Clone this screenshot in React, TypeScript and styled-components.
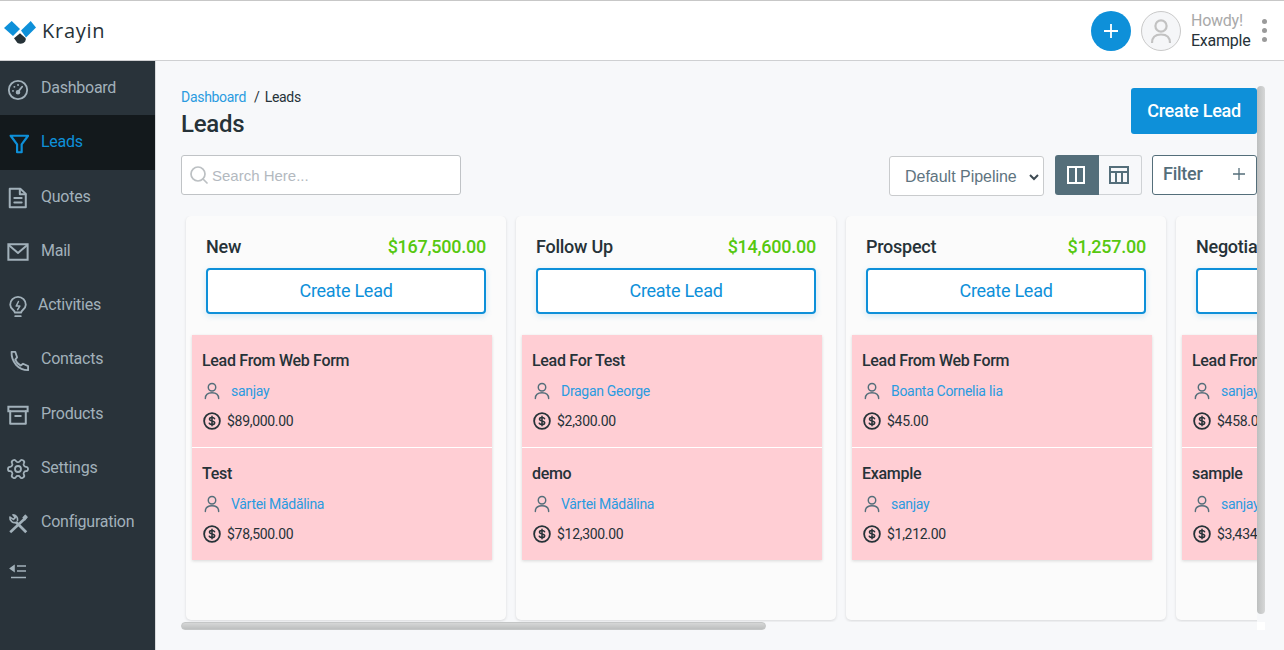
import React from "react";
import styled, { createGlobalStyle } from "styled-components";

const Global = createGlobalStyle`
  html, body { margin: 0; padding: 0; height: 100%; overflow: hidden; background: #f7f8fa; }
  body { font-family: Roboto, "Liberation Sans", sans-serif; color: #263238; letter-spacing: -0.25px; }
  * { box-sizing: border-box; }
`;

const Page = styled.div`
  width: 1284px;
  height: 650px;
  display: flex;
  flex-direction: column;
  overflow: hidden;
`;

const Header = styled.header`
  height: 61px;
  flex: none;
  background: #fff;
  border-top: 1px solid #c7c7c7;
  border-bottom: 1px solid #cfd0d2;
  display: flex;
  align-items: center;
  padding: 0 16px 0 4px;
`;

const Brand = styled.div`
  display: flex;
  align-items: center;
  gap: 6px;
  flex: 1;
`;

const BrandMark = styled.svg`
  width: 32px;
  height: 24px;
  flex: none;
  margin-top: 3px;
`;

const BrandName = styled.span`
  font-family: "Open Sans", sans-serif;
  font-size: 20px;
  font-weight: 500;
  letter-spacing: 0.75px;
  color: #263238;
  line-height: 24px;
  margin-top: 1px;
`;

const AddCircle = styled.div`
  width: 40px;
  height: 40px;
  border-radius: 50%;
  background: #0e90d9;
  display: flex;
  align-items: center;
  justify-content: center;
  margin-right: 10px;
`;

const Avatar = styled.div`
  width: 40px;
  height: 40px;
  border-radius: 50%;
  background: #f5f6f8;
  border: 1px solid #c9c9c9;
  display: flex;
  align-items: center;
  justify-content: center;
  margin-right: 10px;
`;

const UserText = styled.div`
  display: flex;
  flex-direction: column;
  font-size: 16px;
  line-height: 20px;
  width: 63px;
`;

const Howdy = styled.span`
  color: #a9a9a9;
`;

const UserName = styled.span`
  color: #263238;
`;

const Dots = styled.div`
  display: flex;
  flex-direction: column;
  gap: 4px;
  margin-left: 8px;
  width: 6px;
`;

const Dot = styled.span`
  width: 5px;
  height: 5px;
  border-radius: 50%;
  background: #9a9a9a;
`;

const Body = styled.div`
  flex: 1;
  display: flex;
  min-height: 0;
`;

const Sidebar = styled.nav`
  width: 156px;
  flex: none;
  background: #29333a;
  border-right: 1px solid #d8dadc;
  display: flex;
  flex-direction: column;
`;

const NavItem = styled.div<{ $active?: boolean; $narrow?: boolean }>`
  height: 54.25px;
  display: flex;
  align-items: center;
  padding-left: 6px;
  gap: ${(p) => (p.$narrow ? 8 : 11)}px;
  padding-bottom: 1px;
  font-size: 16px;
  color: ${(p) => (p.$active ? "#0e90d9" : "#a2b1ba")};
  background: ${(p) => (p.$active ? "#13191c" : "transparent")};
`;

const IconSlot = styled.span`
  width: 24px;
  height: 24px;
  flex: none;
  display: flex;
  align-items: center;
  justify-content: center;
  margin-top: 4px;
`;

const CollapseRow = styled.div`
  padding: 13.5px 0 0 9px;
  color: #a2b1ba;
  display: flex;
`;

const Main = styled.main`
  flex: 1;
  min-width: 0;
  position: relative;
  padding: 25px 27px 0 25px;
  display: flex;
  flex-direction: column;
`;

const TitleRow = styled.div`
  display: flex;
  justify-content: space-between;
  align-items: flex-start;
  height: 69px;
`;

const Crumbs = styled.div`
  font-size: 14px;
  line-height: 20px;
  padding-top: 1px;
  color: #263238;
  letter-spacing: -0.3px;
  word-spacing: 2px;
`;

const CrumbLink = styled.span`
  color: #2a9be0;
  margin-right: 8px;
`;

const PageTitle = styled.h1`
  margin: 3px 0 0;
  font-size: 24px;
  line-height: 28px;
  font-weight: 500;
  color: #263238;
`;

const PrimaryButton = styled.button`
  width: 126px;
  height: 46px;
  margin-top: 2px;
  border: 0;
  border-radius: 3px;
  background: #0e90d9;
  color: #fff;
  font: 500 18px Roboto, sans-serif;
  letter-spacing: -0.27px;
  padding: 0 0 2px;
`;

const Toolbar = styled.div`
  display: flex;
  align-items: flex-start;
  height: 40px;
`;

const SearchBox = styled.div`
  width: 280px;
  height: 40px;
  border: 1px solid #c0c3c6;
  border-radius: 3px;
  background: #fff;
  display: flex;
  align-items: center;
  padding-left: 7px;
  gap: 3px;
  margin-right: auto;
`;

const SearchPlaceholder = styled.span`
  font: 15px "Liberation Sans", sans-serif;
  letter-spacing: 0;
  color: #b3b9bf;
`;

const PipelineSelect = styled.div`
  width: 155px;
  height: 40px;
  margin: 1px 11px 0 0;
  border: 1px solid #c9cbcd;
  border-radius: 3px;
  background: #fff;
  display: flex;
  align-items: center;
  justify-content: space-between;
  padding: 1px 3px 0 15px;
  font: 16px "Liberation Sans", sans-serif;
  letter-spacing: -0.02px;
  color: #5e7480;
  white-space: nowrap;
`;

const ViewSwitch = styled.div`
  display: flex;
  width: 87px;
  height: 40px;
  margin-right: 10px;
`;

const ViewButton = styled.div<{ $on?: boolean }>`
  width: ${(p) => (p.$on ? 44 : 43)}px;
  height: 40px;
  display: flex;
  align-items: center;
  justify-content: center;
  padding-right: 2px;
  color: ${(p) => (p.$on ? "#fff" : "#546e7a")};
  background: ${(p) => (p.$on ? "#546e7a" : "transparent")};
  border: ${(p) => (p.$on ? "0" : "1px solid #cfd2d5")};
  border-left: 0;
  border-radius: ${(p) => (p.$on ? "3px 0 0 3px" : "0 3px 3px 0")};
`;

const FilterButton = styled.div`
  width: 105px;
  height: 40px;
  border: 1px solid #546e7a;
  border-radius: 3px;
  background: #fff;
  display: flex;
  align-items: center;
  justify-content: space-between;
  padding: 0 10px 3px 10px;
  font-size: 18px;
  font-weight: 500;
  color: #546e7a;
`;

const BoardClip = styled.div`
  margin-top: 21px;
  overflow: hidden;
  height: 406px;
  display: flex;
  gap: 10px;
  padding-left: 5px;
`;

const Column = styled.section`
  flex: 0 0 320px;
  height: 404px;
  background: #fbfbfb;
  border-radius: 5px;
  box-shadow: 0 1px 3px rgba(0, 0, 0, 0.13);
  padding: 0 6px;
`;

const ColumnHead = styled.div`
  display: flex;
  justify-content: space-between;
  align-items: center;
  padding: 10px 14px 0;
  height: 52px;
  font-size: 18px;
  font-weight: 500;
  line-height: 24px;
  white-space: nowrap;
`;

const StageName = styled.span`
  color: #263238;
`;

const StageAmount = styled.span`
  color: #56c80f;
`;

const ColumnAdd = styled.button`
  display: block;
  width: 280px;
  height: 46px;
  margin: 0 14px 21px;
  background: #fff;
  border: 2px solid #0e90d9;
  border-radius: 4px;
  box-shadow: 0 2px 6px rgba(14, 144, 217, 0.18);
  color: #0e90d9;
  font: 400 18px Roboto, sans-serif;
  letter-spacing: -0.27px;
  padding: 0 0 2px;
  white-space: nowrap;
  overflow: hidden;
`;

const CardStack = styled.div`
  width: 300px;
  background: #fff;
  box-shadow: 0 1px 3px rgba(0, 0, 0, 0.14);
`;

const Card = styled.article`
  height: 112px;
  background: #ffced4;
  padding: 16px 10px 0;
  white-space: nowrap;
  overflow: hidden;
  letter-spacing: -0.3px;

  & + & {
    margin-top: 1px;
  }
`;

const CardTitle = styled.div`
  font-size: 16px;
  font-weight: 500;
  line-height: 20px;
  color: #263238;
`;

const PersonRow = styled.div`
  display: flex;
  align-items: center;
  height: 22px;
  margin-top: 9px;
  gap: 9px;
  font-size: 14px;
  color: #2a9be0;
`;

const PersonGlyph = styled.span`
  display: flex;
  color: #546e7a;
`;

const PriceRow = styled.div`
  display: flex;
  align-items: center;
  height: 20px;
  margin-top: 9px;
  padding-left: 1px;
  gap: 6px;
  font-size: 14px;
  color: #263238;
`;

const ScrollX = styled.div`
  position: absolute;
  left: 25px;
  top: 561px;
  width: 585px;
  height: 8px;
  border-radius: 4px;
  background: linear-gradient(#d6d7d7, #bdbfbf);
  border: 1px solid #c4c6c6;
`;

const ScrollY = styled.div`
  position: absolute;
  left: 1101px;
  top: 25px;
  width: 8px;
  height: 528px;
  border-radius: 4px;
  background: linear-gradient(90deg, #bdbfbf, #d6d7d7);
`;

const ScrollCorner = styled.div`
  position: absolute;
  left: 1101px;
  top: 561px;
  width: 8px;
  height: 8px;
  background: #fff;
`;

const I = ({ children, size = 24, sw = 2 }: { children: React.ReactNode; size?: number; sw?: number }) => (
  <svg width={size} height={size} viewBox="0 0 24 24" fill="none" stroke="currentColor" strokeWidth={sw} strokeLinecap="round" strokeLinejoin="round">
    {children}
  </svg>
);

const Logo = () => (
  <BrandMark viewBox="0 0 32 24">
    <path d="M0 8 L7.7 1 L16 9 L9 16 Z" fill="#0e90d9" />
    <path d="M26.7 1 L32 7.5 L22 17.5 L17 10.5 Z" fill="#0e90d9" />
    <path d="M16 13.3 L21.5 18 Q22.5 21 19.5 23 Q16.5 24.5 13.5 23 L10 18.3 Z" fill="#263238" />
  </BrandMark>
);

const icons: Record<string, React.ReactNode> = {
  Dashboard: (
    <I size={22}>
      <circle cx="12" cy="12" r="10" />
      <path d="M12 14 L16.5 8.5" />
      <circle cx="12" cy="14.5" r="1.5" fill="currentColor" />
      <path d="M6.5 13 h.1 M8 8.5 h.1 M12 6.5 h.1" />
    </I>
  ),
  Leads: (
    <I size={22} sw={2.4}>
      <path d="M4 3 H23 L16 12.5 V21 H11 V12.5 Z" />
    </I>
  ),
  Quotes: (
    <I size={22} sw={2.2}>
      <path d="M3 2 H14.5 L20.5 7.5 V22 H3 Z" />
      <path d="M14 2.5 V8 H20" />
      <path d="M8 12 H16 M8 17 H16" />
    </I>
  ),
  Mail: (
    <I size={22} sw={2.2}>
      <path d="M1.5 3.5 H22.5 V20.5 H1.5 Z" strokeLinejoin="miter" />
      <path d="M2.5 5 L12 13 L21.5 5" />
    </I>
  ),
  Activities: (
    <I size={22}>
      <path d="M8.5 18 C8.5 15.5 3.5 14 3.5 9.5 a8.5 8.5 0 0 1 17 0 C20.5 14 15.5 15.5 15.5 18 Z" />
      <path d="M9 22 H15" />
      <path d="M12.5 6 L10 11 H14 L11.5 15" strokeWidth="1.6" />
    </I>
  ),
  Contacts: (
    <I size={22} sw={2}>
      <path d="M5 2 H9 L11 8 L9 10.5 C10.2 13.6 12 15.5 15 17 L17.5 15 L23 17.5 V22 C12.5 22 4.5 13 5 2 Z" />
    </I>
  ),
  Products: (
    <I size={22} sw={2.2}>
      <path d="M1.5 3 H22.5 V8 H1.5 Z" strokeLinejoin="miter" />
      <path d="M3.5 8 V21.5 H20.5 V8" />
      <path d="M9 13 H15" />
    </I>
  ),
  Settings: (
    <I size={24} sw={1.8}>
      <g transform="rotate(90 12 12)">
        <path d="M12.22 2h-.44a2 2 0 0 0-2 2v.18a2 2 0 0 1-1 1.73l-.43.25a2 2 0 0 1-2 0l-.15-.08a2 2 0 0 0-2.73.73l-.22.38a2 2 0 0 0 .73 2.73l.15.1a2 2 0 0 1 1 1.72v.51a2 2 0 0 1-1 1.74l-.15.09a2 2 0 0 0-.73 2.73l.22.38a2 2 0 0 0 2.73.73l.15-.08a2 2 0 0 1 2 0l.43.25a2 2 0 0 1 1 1.73V20a2 2 0 0 0 2 2h.44a2 2 0 0 0 2-2v-.18a2 2 0 0 1 1-1.73l.43-.25a2 2 0 0 1 2 0l.15.08a2 2 0 0 0 2.73-.73l.22-.39a2 2 0 0 0-.73-2.73l-.15-.08a2 2 0 0 1-1-1.74v-.5a2 2 0 0 1 1-1.74l.15-.09a2 2 0 0 0 .73-2.73l-.22-.38a2 2 0 0 0-2.73-.73l-.15.08a2 2 0 0 1-2 0l-.43-.25a2 2 0 0 1-1-1.73V4a2 2 0 0 0-2-2z" />
        <circle cx="12" cy="12" r="3" />
      </g>
    </I>
  ),
  Configuration: (
    <I size={22} sw={2.5}>
      <path d="M10 10 L21 21" strokeLinecap="butt" strokeWidth="3" />
      <path d="M3.2 4.5 a5.2 5.2 0 0 0 7.2 5.5 M3.2 4.5 L7 7 L9 5 L6.5 2 a5.2 5.2 0 0 1 5 6" strokeWidth="1.8" />
      <path d="M3.5 21 L19 6.5" strokeLinecap="butt" strokeWidth="2.8" />
      <path d="M17.5 5 L20 2.5 L22 4.5 L19.5 7.5 Z" fill="currentColor" strokeWidth="1.4" />
    </I>
  ),
};

const navItems = ["Dashboard", "Leads", "Quotes", "Mail", "Activities", "Contacts", "Products", "Settings", "Configuration"];

const PersonIcon = () => (
  <I size={20} sw={1.7}>
    <circle cx="12" cy="7.5" r="4.5" />
    <path d="M4 21 C4 16 7.5 14 12 14 C16.5 14 20 16 20 21" />
  </I>
);

const MoneyIcon = () => (
  <svg width="18" height="18" viewBox="0 0 24 24" fill="none" stroke="#263238" strokeWidth="2.4" strokeLinecap="round">
    <circle cx="12" cy="12" r="10.5" />
    <path d="M15.5 9 C15 7.8 13.5 7.4 12 7.4 C10 7.4 8.6 8.3 8.6 9.7 C8.6 12.6 15.6 11.2 15.6 14.2 C15.6 15.6 14 16.6 12 16.6 C10.4 16.6 9 16 8.4 15 M12 5.6 V18.4" strokeWidth="2" />
  </svg>
);

type Lead = { title: string; person: string; price: string };
type Stage = { name: string; amount: string; leads: Lead[] };

const stages: Stage[] = [
  {
    name: "New",
    amount: "$167,500.00",
    leads: [
      { title: "Lead From Web Form", person: "sanjay", price: "$89,000.00" },
      { title: "Test", person: "Vârtei Mădălina", price: "$78,500.00" },
    ],
  },
  {
    name: "Follow Up",
    amount: "$14,600.00",
    leads: [
      { title: "Lead For Test", person: "Dragan George", price: "$2,300.00" },
      { title: "demo", person: "Vârtei Mădălina", price: "$12,300.00" },
    ],
  },
  {
    name: "Prospect",
    amount: "$1,257.00",
    leads: [
      { title: "Lead From Web Form", person: "Boanta Cornelia Iia", price: "$45.00" },
      { title: "Example", person: "sanjay", price: "$1,212.00" },
    ],
  },
  {
    name: "Negotiation",
    amount: "$3,892.00",
    leads: [
      { title: "Lead From Web Form", person: "sanjay", price: "$458.00" },
      { title: "sample", person: "sanjay", price: "$3,434.00" },
    ],
  },
];

export default function App() {
  return (
    <Page>
      <Global />
      <Header>
        <Brand>
          <Logo />
          <BrandName>Krayin</BrandName>
        </Brand>
        <AddCircle>
          <svg width="16" height="16" viewBox="0 0 16 16" stroke="#fff" strokeWidth="1.8">
            <path d="M8 1 V15 M1 8 H15" />
          </svg>
        </AddCircle>
        <Avatar>
          <svg width="26" height="28" viewBox="0 0 26 28" fill="none" stroke="#c2c2c2" strokeWidth="2.2">
            <circle cx="13" cy="9" r="5.6" />
            <path d="M4 26 C4 20 8 17.5 13 17.5 C18 17.5 22 20 22 26" />
          </svg>
        </Avatar>
        <UserText>
          <Howdy>Howdy!</Howdy>
          <UserName>Example</UserName>
        </UserText>
        <Dots>
          <Dot />
          <Dot />
          <Dot />
        </Dots>
      </Header>
      <Body>
        <Sidebar>
          {navItems.map((n) => (
            <NavItem key={n} $active={n === "Leads"} $narrow={n === "Activities"}>
              <IconSlot>{icons[n]}</IconSlot>
              <span>{n}</span>
            </NavItem>
          ))}
          <CollapseRow>
            <svg width="18" height="18" viewBox="0 0 18 18" fill="none" stroke="currentColor" strokeWidth="1.6">
              <path d="M8 3 H17 M8 8 H17 M2 14.5 H17" />
              <path d="M5 3 L1.5 5.5 L5 8 Z" fill="currentColor" />
            </svg>
          </CollapseRow>
        </Sidebar>
        <Main>
          <TitleRow>
            <div>
              <Crumbs>
                <CrumbLink>Dashboard</CrumbLink>/ Leads
              </Crumbs>
              <PageTitle>Leads</PageTitle>
            </div>
            <PrimaryButton>Create Lead</PrimaryButton>
          </TitleRow>
          <Toolbar>
            <SearchBox>
              <svg width="20" height="20" viewBox="0 0 20 20" fill="none" stroke="#bcc0c3" strokeWidth="1.7" strokeLinecap="round">
                <circle cx="9" cy="9" r="7" />
                <path d="M14 14 L18 18" />
              </svg>
              <SearchPlaceholder>Search Here...</SearchPlaceholder>
            </SearchBox>
            <PipelineSelect>
              Default Pipeline
              <svg width="12" height="12" viewBox="0 0 12 12" fill="none" stroke="#3d4a52" strokeWidth="2">
                <path d="M2 4 L6 8 L10 4" />
              </svg>
            </PipelineSelect>
            <ViewSwitch>
              <ViewButton $on>
                <svg width="20" height="20" viewBox="0 0 20 20" fill="none" stroke="currentColor" strokeWidth="2">
                  <rect x="2" y="2" width="16" height="16" />
                  <path d="M10 2 V18" />
                </svg>
              </ViewButton>
              <ViewButton>
                <svg width="22" height="20" viewBox="0 0 22 20" fill="none" stroke="currentColor" strokeWidth="2">
                  <rect x="2" y="2" width="18" height="16" />
                  <path d="M2 7 H20 M8 7 V18 M14 7 V18" />
                </svg>
              </ViewButton>
            </ViewSwitch>
            <FilterButton>
              Filter
              <svg width="14" height="14" viewBox="0 0 14 14" stroke="#546e7a" strokeWidth="1.3">
                <path d="M7 1 V13 M1 7 H13" />
              </svg>
            </FilterButton>
          </Toolbar>
          <BoardClip>
            {stages.map((s) => (
              <Column key={s.name}>
                <ColumnHead>
                  <StageName>{s.name}</StageName>
                  <StageAmount>{s.amount}</StageAmount>
                </ColumnHead>
                <ColumnAdd>Create Lead</ColumnAdd>
                <CardStack>
                  {s.leads.map((l) => (
                    <Card key={l.title}>
                      <CardTitle>{l.title}</CardTitle>
                      <PersonRow>
                        <PersonGlyph>
                          <PersonIcon />
                        </PersonGlyph>
                        {l.person}
                      </PersonRow>
                      <PriceRow>
                        <MoneyIcon />
                        {l.price}
                      </PriceRow>
                    </Card>
                  ))}
                </CardStack>
              </Column>
            ))}
          </BoardClip>
          <ScrollX />
          <ScrollY />
          <ScrollCorner />
        </Main>
      </Body>
    </Page>
  );
}
